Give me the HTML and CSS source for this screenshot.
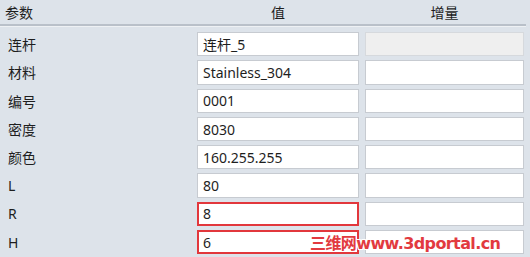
FILE: index.html
```html
<!DOCTYPE html>
<html lang="zh">
<head>
    <meta charset="UTF-8">
    <title>参数</title>
    <link rel="stylesheet" href="styles.css">
</head>
<body>
    <div class="panel">
        <div class="header">
            <span class="h-name">参数</span>
            <span class="h-col">值</span>
            <span class="h-col">增量</span>
        </div>
        <div class="rows">
            <span class="label">连杆</span>
            <input class="field" value="连杆_5">
            <input class="field disabled" disabled>

            <span class="label">材料</span>
            <input class="field" value="Stainless_304">
            <input class="field">

            <span class="label">编号</span>
            <input class="field" value="0001">
            <input class="field">

            <span class="label">密度</span>
            <input class="field" value="8030">
            <input class="field">

            <span class="label">颜色</span>
            <input class="field" value="160.255.255">
            <input class="field">

            <span class="label">L</span>
            <input class="field" value="80">
            <input class="field">

            <span class="label">R</span>
            <input class="field marked" value="8">
            <input class="field">

            <span class="label">H</span>
            <input class="field marked" value="6">
            <input class="field">
        </div>
        <div class="watermark">三维网www.3dportal.cn</div>
    </div>
</body>
</html>
```

FILE: styles.css
```css
html, body {
    margin: 0;
    background: #dde3ea;
}
.panel {
    position: relative;
    width: 530px;
    height: 257px;
    font-family: "Noto Sans", "Noto Sans CJK SC", sans-serif;
    color: #1e1e1e;
}
.header {
    display: grid;
    grid-template-columns: 183px 162px 159px;
    column-gap: 6px;
    padding-left: 8px;
    height: 24px;
    width: 518px;
    align-items: center;
    border-bottom: 2px solid #b9c0c9;
    box-shadow: 0 1px 0 #eef1f4;
    font-size: 14px;
}
.h-name {
    margin-left: -3px;
}
.h-col {
    text-align: center;
}
.rows {
    display: grid;
    grid-template-columns: 183px 162px 159px;
    grid-auto-rows: 24.3px;
    column-gap: 6px;
    row-gap: 4px;
    padding: 6px 0 0 8px;
    align-items: center;
}
.label {
    font-size: 14px;
}
.field {
    box-sizing: border-box;
    height: 24.3px;
    width: 100%;
    margin: 0;
    padding: 0 5px;
    border: 1px solid #c7cbd1;
    background: #fff;
    font-family: "Noto Sans", "Noto Sans CJK SC", sans-serif;
    font-size: 14px;
    color: #1e1e1e;
    outline: none;
}
.field.disabled {
    background: #efefef;
    border-color: #d6d9dd;
}
.field.marked {
    border: 2px solid #e2373c;
    padding-left: 4px;
}
.watermark {
    position: absolute;
    left: 310px;
    top: 230px;
    font-family: "DejaVu Sans", "Noto Sans CJK SC", sans-serif;
    font-weight: bold;
    font-size: 16px;
    letter-spacing: -0.6px;
    color: #e23a3f;
    text-shadow: 1px 0 #fff, -1px 0 #fff, 0 1px #fff, 0 -1px #fff,
                 1px 1px #fff, -1px -1px #fff, 1px -1px #fff, -1px 1px #fff;
}
```
